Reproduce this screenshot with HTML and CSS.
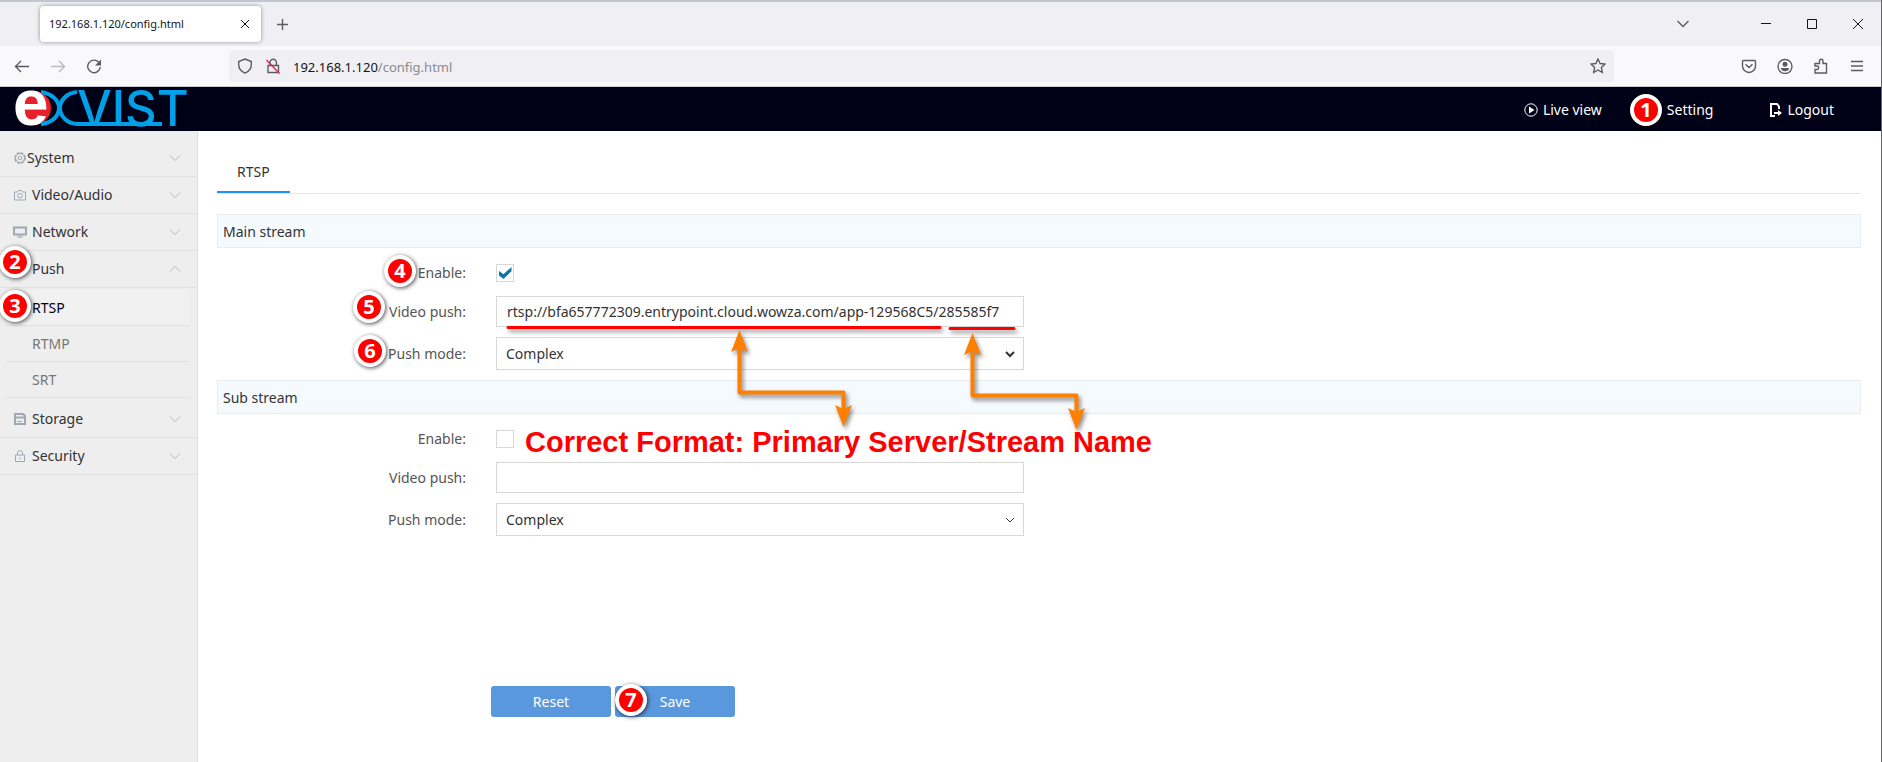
FILE: index.html
```html
<!DOCTYPE html>
<html lang="en">
<head>
    <meta charset="UTF-8">
    <meta name="viewport" content="width=device-width, initial-scale=1.0">
    <title>192.168.1.120/config.html</title>
    <link rel="stylesheet" href="styles.css">
</head>
<body>
    <div class="browser">
        <div class="tab-bar">
            <div class="browser-tab">
                <span>192.168.1.120/config.html</span>
                <button class="icon-btn" aria-label="Close tab"><svg width="16" height="16" viewBox="0 0 16 16"><path d="M4 4l8 8M12 4l-8 8"/></svg></button>
            </div>
            <button class="icon-btn new-tab" aria-label="New tab"><svg width="16" height="16" viewBox="0 0 16 16"><path d="M8.500 3v11M3 8.500h11"/></svg></button>
            <div class="window-buttons">
                <button class="icon-btn list-tabs" aria-label="List all tabs"><svg width="16" height="16" viewBox="0 0 16 16"><path d="M2.500 5L8 10.500 13.500 5"/></svg></button>
                <button class="icon-btn dark" aria-label="Minimize"><svg width="16" height="16" viewBox="0 0 16 16"><path d="M3 7.500h10"/></svg></button>
                <button class="icon-btn dark" aria-label="Maximize"><svg width="16" height="16" viewBox="0 0 16 16"><path d="M3.500 3.500h9v9h-9z"/></svg></button>
                <button class="icon-btn dark" aria-label="Close window"><svg width="16" height="16" viewBox="0 0 16 16"><path d="M3 3l10 10M13 3L3 13"/></svg></button>
            </div>
        </div>
        <div class="nav-bar">
            <div class="nav-buttons">
                <button class="icon-btn" aria-label="Back"><svg width="16" height="16" viewBox="0 0 16 16"><path d="M15 8.500H1.500M7 3L1.500 8.500 7 14"/></svg></button>
                <button class="icon-btn" aria-label="Forward" disabled><svg width="16" height="16" viewBox="0 0 16 16"><path d="M1 8.500h13.500M9 3l5.500 5.500L9 14"/></svg></button>
                <button class="icon-btn" aria-label="Reload"><svg width="16" height="16" viewBox="0 0 16 16"><path d="M12.500 4A6.300 6.300 0 1 0 14.300 9"/><path class="solid" d="M15 1.500v6H9z"/></svg></button>
            </div>
            <div class="url-bar">
                <svg width="16" height="16" viewBox="0 0 16 16"><path d="M8 1l6.300 2.500v3C14.300 10.500 12 13.500 8 15.200 4 13.500 1.700 10.500 1.700 6.500v-3z"/></svg>
                <svg width="16" height="16" viewBox="0 0 16 16"><path d="M3 7.500h10.500v7H3zM5 7.500V4.500a3.200 3.200 0 0 1 6.400 0v3"/><path class="slash" d="M1.500 2l13 13.500"/></svg>
                <span class="url">192.168.1.120<span class="path">/config.html</span></span>
                <svg width="16" height="16" viewBox="0 0 16 16"><path d="M8 1l2.100 4.500 4.900.6-3.600 3.400.9 5L8 12l-4.300 2.500.9-5L1 6.100l4.900-.6z"/></svg>
            </div>
            <div class="nav-tools">
                <button class="icon-btn" aria-label="Save to Pocket"><svg width="16" height="16" viewBox="0 0 16 16"><path d="M2.500 2.500h11a1 1 0 0 1 1 1V8a6.500 6.500 0 0 1-13 0V3.500a1 1 0 0 1 1-1zM4.500 6.300L8 9.500l3.500-3.200"/></svg></button>
                <button class="icon-btn" aria-label="Account"><svg width="16" height="16" viewBox="0 0 16 16"><circle cx="8" cy="8.500" r="7"/><circle class="solid" cx="8" cy="6.200" r="2.500"/><path class="solid" d="M3.800 10h8.400A4.600 4.600 0 0 1 8 13.300 4.600 4.600 0 0 1 3.800 10z"/></svg></button>
                <button class="icon-btn" aria-label="Extensions"><svg width="16" height="16" viewBox="0 0 16 16"><path d="M2 15v-3.500h2a1.700 1.700 0 0 0 0-3.500H2V5.500h4.500V3a1.700 1.700 0 0 1 3.500 0v2.500h3.500V15z"/></svg></button>
                <button class="icon-btn" aria-label="Menu"><svg width="16" height="16" viewBox="0 0 16 16"><path d="M2 3.500h12M2 8h12M2 12.500h12"/></svg></button>
            </div>
        </div>
    </div>

    <header class="header">
        <svg class="logo" width="176" height="40" viewBox="0 0 176 40" role="img" aria-label="exvist">
            <circle class="logo-disc" cx="21" cy="19" r="17"/>
            <text class="logo-e" x="0" y="36">e</text>
            <path class="logo-line" d="M28 3C40 5 46 12 46 19S40 34 28 35"/>
            <path class="logo-line" d="M64 3C53 4 47 12 47 19s6 16 18 16h84"/>
            <text class="logo-text" x="64" y="37">VIST</text>
        </svg>
        <nav class="top-nav">
            <a href="#"><svg width="14" height="14" viewBox="0 0 14 14"><circle cx="7" cy="7" r="6.200"/><path class="solid" d="M5 3.500L10.500 7 5 10.500z"/></svg>Live view</a>
            <a href="#">Setting</a>
            <a href="#"><svg width="14" height="14" viewBox="0 0 14 14"><path class="thick" d="M11 6V3.500L9 1H3v12h4"/><path class="solid" d="M6 9h4V7l4 3-4 3v-2H6z"/></svg>Logout</a>
        </nav>
    </header>

    <div class="content">
        <aside class="sidebar">
            <a class="menu-item tight" href="#">
                <svg width="12" height="12" viewBox="0 0 12 12"><circle cx="6" cy="6" r="5.200" stroke-width="1.500" stroke-dasharray="2.700 1.380"/><circle cx="6" cy="6" r="4.500"/><circle cx="6" cy="6" r="1.800"/></svg>
                <span>System</span>
                <svg class="chevron" width="12" height="12" viewBox="0 0 12 12"><path d="M1 3.500l5 5 5-5"/></svg>
            </a>
            <a class="menu-item" href="#">
                <svg width="12" height="12" viewBox="0 0 12 12"><path d="M.5 3h3l1-1.500h3l1 1.500h3v8H.5z"/><circle cx="6" cy="6.700" r="2.300"/></svg>
                <span>Video/Audio</span>
                <svg class="chevron" width="12" height="12" viewBox="0 0 12 12"><path d="M1 3.500l5 5 5-5"/></svg>
            </a>
            <a class="menu-item" href="#">
                <svg class="wide" width="12" height="12" viewBox="0 0 12 12"><path class="thick" d="M0 1.500h12v7H0z"/><path d="M3 11h6M6 9v2"/></svg>
                <span>Network</span>
                <svg class="chevron" width="12" height="12" viewBox="0 0 12 12"><path d="M1 3.500l5 5 5-5"/></svg>
            </a>
            <a class="menu-item" href="#">
                <svg width="12" height="12" viewBox="0 0 12 12"></svg>
                <span>Push</span>
                <svg class="chevron" width="12" height="12" viewBox="0 0 12 12"><path d="M1 8.500l5-5 5 5"/></svg>
            </a>
            <div class="submenu">
                <a class="active" href="#">RTSP</a>
                <a href="#">RTMP</a>
                <a href="#">SRT</a>
            </div>
            <a class="menu-item" href="#">
                <svg width="12" height="12" viewBox="0 0 12 12"><path class="thick" d="M1 1h8l2 2v8H1zM2 4.500h8"/><path d="M3 8.500h5"/></svg>
                <span>Storage</span>
                <svg class="chevron" width="12" height="12" viewBox="0 0 12 12"><path d="M1 3.500l5 5 5-5"/></svg>
            </a>
            <a class="menu-item" href="#">
                <svg width="12" height="12" viewBox="0 0 12 12"><path d="M1.500 5h9v6.500h-9zM3.500 5V3a2.500 2.500 0 0 1 5 0v2M6 7.500v2"/></svg>
                <span>Security</span>
                <svg class="chevron" width="12" height="12" viewBox="0 0 12 12"><path d="M1 3.500l5 5 5-5"/></svg>
            </a>
        </aside>

        <main class="main">
            <div class="tabs">
                <button class="tab">RTSP</button>
            </div>
            <form>
                <h2 class="section-title">Main stream</h2>
                <div class="fields">
                    <label for="main-enable">Enable:</label>
                    <input type="checkbox" id="main-enable" checked>
                    <label for="main-url">Video push:</label>
                    <input type="text" id="main-url" value="rtsp://bfa657772309.entrypoint.cloud.wowza.com/app-129568C5/285585f7">
                    <label for="main-mode">Push mode:</label>
                    <div class="select-box">
                        <select id="main-mode"><option>Complex</option></select>
                        <svg width="10" height="10" viewBox="0 0 10 10"><path class="thick" d="M1 3l4 4 4-4"/></svg>
                    </div>
                </div>
                <h2 class="section-title">Sub stream</h2>
                <div class="fields">
                    <label for="sub-enable">Enable:</label>
                    <input type="checkbox" id="sub-enable">
                    <label for="sub-url">Video push:</label>
                    <input type="text" id="sub-url">
                    <label for="sub-mode">Push mode:</label>
                    <div class="select-box">
                        <select id="sub-mode"><option>Complex</option></select>
                        <svg width="10" height="10" viewBox="0 0 10 10"><path d="M1 3l4 4 4-4"/></svg>
                    </div>
                </div>
                <div class="actions">
                    <button type="reset">Reset</button>
                    <button type="submit">Save</button>
                </div>
            </form>
        </main>
    </div>

    <!-- Step markers and notes over the page -->
    <span class="step step-1">1</span>
    <span class="step step-2">2</span>
    <span class="step step-3">3</span>
    <span class="step step-4">4</span>
    <span class="step step-5">5</span>
    <span class="step step-6">6</span>
    <span class="step step-7">7</span>
    <svg class="arrows" width="600" height="120" viewBox="500 320 600 120">
        <path class="underline" d="M508 327.500h432M950 328.500h64"/>
        <path class="arrow" d="M739.500 346v46.500h104V412"/>
        <path class="head" d="M739.500 330l8.500 22-8.500-4-8.500 4zM843.500 427l8.500-22-8.500 4-8.500-4z"/>
        <path class="arrow" d="M972.500 349v46.500h104V415"/>
        <path class="head" d="M972.500 333l8.500 22-8.500-4-8.500 4zM1076.500 430l8.500-22-8.500 4-8.500-4z"/>
    </svg>
    <p class="note">Correct Format: Primary Server/Stream Name</p>
</body>
</html>
```
FILE: styles.css
```css
* {
    box-sizing: border-box;
}

body {
    margin: 0;
    min-height: 100vh;
    display: flex;
    flex-direction: column;
    position: relative;
    font-family: "Noto Sans", "Open Sans", sans-serif;
    font-size: 14px;
    line-height: 20px;
    color: #333;
    background: #fff;
    border-right: 1px solid #63666e;
}

button, input, select {
    font: inherit;
    color: inherit;
}

a {
    color: inherit;
    text-decoration: none;
}

svg {
    flex: none;
    fill: none;
    stroke: currentColor;
}

svg .solid {
    fill: currentColor;
    stroke: none;
}

svg .thick {
    stroke-width: 2;
}

/* Browser window */
.browser {
    color: #5b5b66;
    border-top: 2px solid #c2c7cf;
    border-bottom: 1px solid #ccccce;
}

.tab-bar {
    display: flex;
    align-items: center;
    height: 44px;
    padding: 0 15px 0 40px;
    background: #f0f0f4;
}

.browser-tab {
    display: flex;
    align-items: center;
    justify-content: space-between;
    width: 221px;
    height: 36px;
    padding: 0 8px 0 9px;
    font-size: 11px;
    color: #15141a;
    background: #fff;
    border-radius: 4px;
    box-shadow: 0 0 4px rgba(0, 0, 0, 0.4);
}

.icon-btn {
    display: flex;
    padding: 0;
    background: none;
    border: none;
}

.icon-btn:disabled {
    opacity: 0.4;
}

.dark {
    color: #15141a;
}

.new-tab {
    margin-left: 13px;
}

.new-tab svg, .list-tabs svg, .nav-bar svg {
    stroke-width: 1.4;
}

.window-buttons {
    display: flex;
    gap: 30px;
    margin-left: auto;
}

.list-tabs {
    margin-right: 37px;
}

.nav-bar {
    display: flex;
    align-items: center;
    height: 40px;
    padding: 0 16px 0 14px;
    background: #f9f9fb;
}

.nav-buttons, .nav-tools {
    display: flex;
    gap: 20px;
}

.url-bar {
    flex: 1;
    display: flex;
    align-items: center;
    gap: 12px;
    height: 32px;
    margin: 0 127px;
    padding: 0 8px;
    background: #f0f0f4;
    border-radius: 4px;
}

.url {
    flex: 1;
    padding-top: 2px;
    font-size: 13px;
    color: #15141a;
}

.path {
    color: #8a8a92;
}

.slash {
    stroke: #e22850;
}

/* Camera header */
.header {
    display: flex;
    align-items: center;
    justify-content: space-between;
    height: 44px;
    padding: 0 47px 0 13px;
    color: #fff;
    background: #000016;
}

.logo {
    overflow: visible;
}

.logo-disc {
    fill: #e8202a;
    stroke: none;
}

.logo-e {
    font: bold 64px "Liberation Sans", Arial, sans-serif;
    fill: #fff;
    stroke: none;
}

.logo-line {
    stroke: #00a0e9;
    stroke-width: 4;
}

.logo-text {
    font: 500 49px Inter, sans-serif;
    fill: #00a0e9;
    stroke: none;
}

.top-nav {
    display: flex;
    gap: 55px;
    padding-top: 2px;
}

.top-nav a {
    display: flex;
    align-items: center;
    gap: 5px;
}

.top-nav a:nth-child(2) {
    margin-left: 10px;
}

/* Layout */
.content {
    flex: 1;
    display: flex;
}

.sidebar {
    width: 198px;
    padding-top: 9px;
    background: #eee;
    border-right: 1px solid #e0e0e0;
}

.menu-item {
    display: flex;
    align-items: center;
    gap: 6px;
    height: 37px;
    padding: 0 16px 0 14px;
    border-bottom: 1px solid #e0e0e0;
}

.menu-item.tight {
    gap: 1px;
}

.menu-item svg {
    color: #a0a7b3;
}

.menu-item .wide {
    overflow: visible;
}

.menu-item .chevron {
    margin-left: auto;
    color: #b8b8b8;
}

.submenu {
    padding: 2px 8px 3px 6px;
    color: #777;
}

.submenu a {
    display: flex;
    align-items: center;
    height: 36px;
    padding-left: 26px;
    border-bottom: 1px solid #e0e0e0;
}

.submenu .active {
    color: #000016;
    background: #f1f1f1;
}

.main {
    flex: 1;
    padding: 20px 20px 20px 19px;
}

.tabs {
    display: flex;
    height: 43px;
    margin-bottom: 20px;
    border-bottom: 1px solid #e6e6e6;
}

.tab {
    padding: 2px 20px 0;
    background: none;
    border: none;
    border-bottom: 2px solid #1e90ff;
}

.section-title {
    height: 34px;
    margin: 0;
    padding: 1px 5px 0;
    font-size: 14px;
    font-weight: normal;
    line-height: 32px;
    background: #f5faff;
    border: 1px solid #e9edf0;
}

.fields {
    display: grid;
    grid-template-columns: 249px minmax(0, 528px);
    grid-template-rows: 26px 31px 33px;
    gap: 10px 30px;
    align-items: center;
    padding: 12px 0 10px;
}

.fields label {
    text-align: right;
    color: #555;
}

.fields input, .fields select {
    margin: 0;
    background: #fff;
    border: 1px solid #d8d8d8;
    border-radius: 0;
    appearance: none;
}

.fields input[type="text"] {
    width: 100%;
    height: 31px;
    padding: 0 10px;
}

.fields input[type="checkbox"] {
    width: 18px;
    height: 18px;
    display: grid;
    place-content: center;
}

.fields input[type="checkbox"]:checked::before {
    content: "";
    width: 13px;
    height: 12px;
    background: #0f75a8;
    clip-path: polygon(0 30%, 38% 60%, 100% 0, 100% 35%, 38% 100%, 0 66%);
}

.select-box {
    display: flex;
    align-items: center;
}

.select-box select {
    width: 100%;
    height: 33px;
    padding: 0 9px;
}

.select-box svg {
    margin-left: -19px;
    pointer-events: none;
}

.actions {
    display: flex;
    gap: 4px;
    margin-top: 140px;
    padding-left: 274px;
}

.actions button {
    width: 120px;
    height: 31px;
    padding: 0;
    color: #fff;
    background: #5a98de;
    border: none;
    border-radius: 3px;
}

/* Step markers */
.step {
    position: absolute;
    width: 32px;
    height: 32px;
    font: bold 20px/24px "Noto Sans", sans-serif;
    text-align: center;
    color: #fff;
    background: #f00;
    border: 4px solid #fff;
    border-radius: 50%;
    box-shadow: 1px 1px 4px rgba(0, 0, 0, 0.7);
}

.step-1 {
    top: 94px;
    right: 219px;
}

.step-2 {
    top: 246px;
    left: -1px;
}

.step-3 {
    top: 290px;
    left: -1px;
}

.step-4 {
    top: 255px;
    left: 384px;
}

.step-5 {
    top: 291px;
    left: 353px;
}

.step-6 {
    top: 335px;
    left: 354px;
}

.step-7 {
    top: 684px;
    left: 615px;
}

.arrows {
    position: absolute;
    top: 320px;
    left: 500px;
    filter: drop-shadow(2px 3px 2px rgba(0, 0, 0, 0.45));
    pointer-events: none;
}

.underline {
    stroke: #f00;
    stroke-width: 3;
    stroke-linecap: round;
}

.arrow {
    stroke: #ff8000;
    stroke-width: 4;
    stroke-linejoin: round;
}

.head {
    fill: #ff8000;
    stroke: none;
}

.note {
    position: absolute;
    top: 425px;
    left: 525px;
    margin: 0;
    font: bold 29px/34px "Liberation Sans", Arial, sans-serif;
    color: #f00;
    white-space: nowrap;
}
```
